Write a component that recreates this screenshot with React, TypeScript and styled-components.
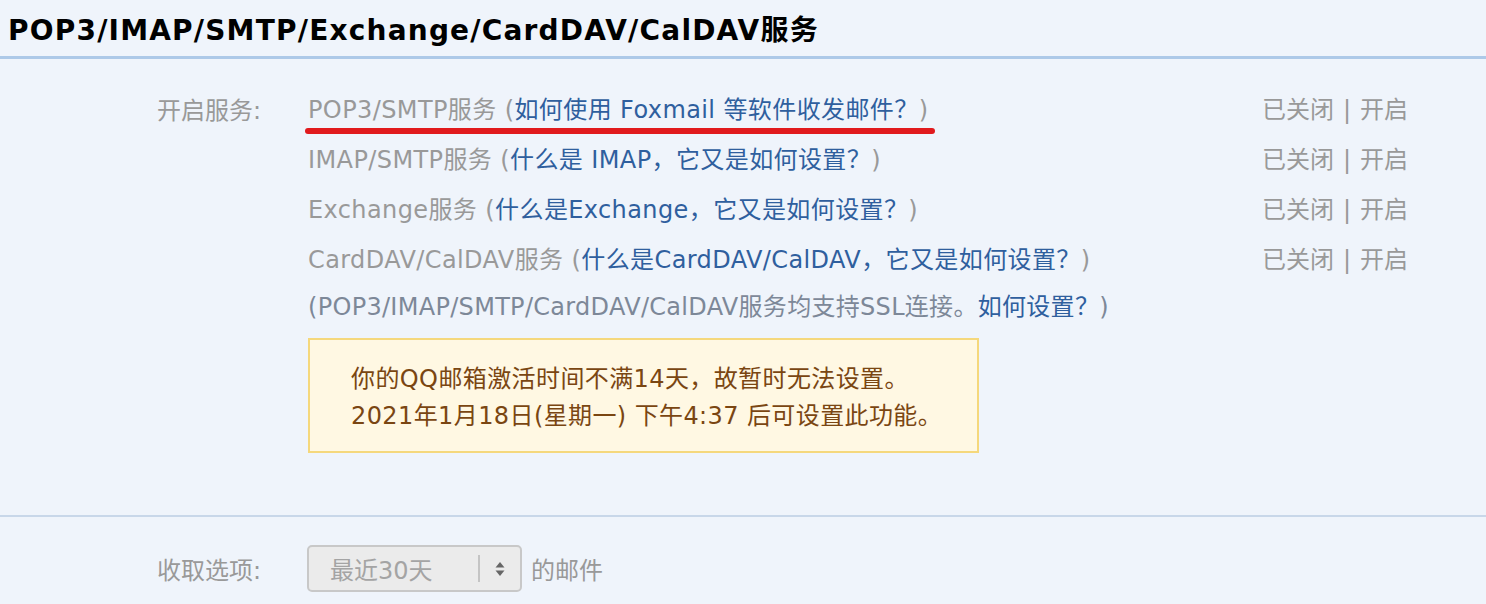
import React from "react";
import styled, { createGlobalStyle } from "styled-components";

const Global = createGlobalStyle`
  html, body { margin: 0; padding: 0; background: #eff4fb; }
  body { font-family: "DejaVu Sans", "Noto Sans CJK SC", sans-serif; }
`;

const Page = styled.div`
  width: 1486px;
  height: 604px;
  overflow: hidden;
  background: #eff4fb;
`;

const Title = styled.h2`
  margin: 0;
  padding: 14px 0 0 8px;
  box-sizing: border-box;
  font-size: 28px;
  letter-spacing: 1.2px;
  font-weight: bold;
  color: #000;
  line-height: 34px;
  border-bottom: 3px solid #adc9e8;
  height: 59px;
`;

const Section = styled.div`
  display: grid;
  grid-template-columns: 151px 1fr;
  padding: 23px 0 0 157px;
`;

const Label = styled.div`
  color: #999;
  font-size: 24px;
  line-height: 50px;
  padding-top: 4px;
`;

const Body = styled.div`
  display: flex;
  flex-direction: column;
`;

const Row = styled.div`
  display: flex;
  justify-content: space-between;
  align-items: center;
  height: 50px;
  font-size: 24px;
  padding-right: 78px;
`;

const Service = styled.span`
  position: relative;
  color: #999;
  white-space: nowrap;
  letter-spacing: 0.4px;
`;

const Link = styled.span`
  color: #2f5f9e;
`;

const Underline = styled.span`
  position: absolute;
  left: -3px;
  right: -7px;
  bottom: -9px;
  height: 6px;
  border-radius: 3px;
  background: #e11a1d;
`;

const Status = styled.span`
  color: #999;
  white-space: nowrap;
`;

const Sep = styled.span`
  margin: 0 9px;
`;

const Note = styled.div`
  color: #7d8898;
  font-size: 24px;
  line-height: 50px;
  white-space: nowrap;
  letter-spacing: 0.3px;
`;

const Notice = styled.div`
  margin-top: 6px;
  width: 671px;
  height: 115px;
  box-sizing: border-box;
  border: 2px solid #f5d87c;
  background: #fff8e3;
  color: #7a4612;
  font-size: 24px;
  line-height: 37px;
  padding: 21px 0 0 41px;
  white-space: nowrap;
  letter-spacing: 0.4px;
`;

const Divider = styled.div`
  margin-top: 62px;
  height: 2px;
  background: #c8d7e9;
`;

const OptionRow = styled.div`
  display: grid;
  grid-template-columns: 150px auto 1fr;
  align-items: center;
  padding: 28px 0 0 157px;
  font-size: 24px;
  color: #999;
`;

const Select = styled.div`
  width: 215px;
  height: 47px;
  box-sizing: border-box;
  border: 2px solid #c8c8c8;
  border-radius: 5px;
  background: #ebebeb;
  display: flex;
  align-items: center;
  color: #a4a4a4;
`;

const SelectText = styled.span`
  flex: 1;
  padding-left: 21px;
`;

const SelectBar = styled.span`
  width: 2px;
  height: 27px;
  background: #c4c4c4;
`;

const Arrows = styled.span`
  width: 40px;
  display: flex;
  justify-content: center;
`;

const Suffix = styled.span`
  margin-left: 9px;
`;

const services = [
  { name: "POP3/SMTP服务", link: "如何使用 Foxmail 等软件收发邮件？", mark: true },
  { name: "IMAP/SMTP服务", link: "什么是 IMAP，它又是如何设置？", mark: false },
  { name: "Exchange服务", link: "什么是Exchange，它又是如何设置？", mark: false },
  { name: "CardDAV/CalDAV服务", link: "什么是CardDAV/CalDAV，它又是如何设置？", mark: false },
];

export default function App() {
  return (
    <Page>
      <Global />
      <Title>POP3/IMAP/SMTP/Exchange/CardDAV/CalDAV服务</Title>
      <Section>
        <Label>开启服务:</Label>
        <Body>
          {services.map((s) => (
            <Row key={s.name}>
              <Service>
                {s.name} (<Link>{s.link}</Link>)
                {s.mark && <Underline />}
              </Service>
              <Status>
                已关闭<Sep>|</Sep>开启
              </Status>
            </Row>
          ))}
          <Note>
            (POP3/IMAP/SMTP/CardDAV/CalDAV服务均支持SSL连接。<Link>如何设置？</Link>)
          </Note>
          <Notice>
            你的QQ邮箱激活时间不满14天，故暂时无法设置。
            <br />
            2021年1月18日(星期一) 下午4:37 后可设置此功能。
          </Notice>
        </Body>
      </Section>
      <Divider />
      <OptionRow>
        <span>收取选项:</span>
        <Select>
          <SelectText>最近30天</SelectText>
          <SelectBar />
          <Arrows>
            <svg width="10" height="16" viewBox="0 0 10 16">
              <path d="M5 1 L9.5 6.5 H0.5 Z" fill="#666" />
              <path d="M5 15 L9.5 9.5 H0.5 Z" fill="#666" />
            </svg>
          </Arrows>
        </Select>
        <Suffix>的邮件</Suffix>
      </OptionRow>
    </Page>
  );
}
